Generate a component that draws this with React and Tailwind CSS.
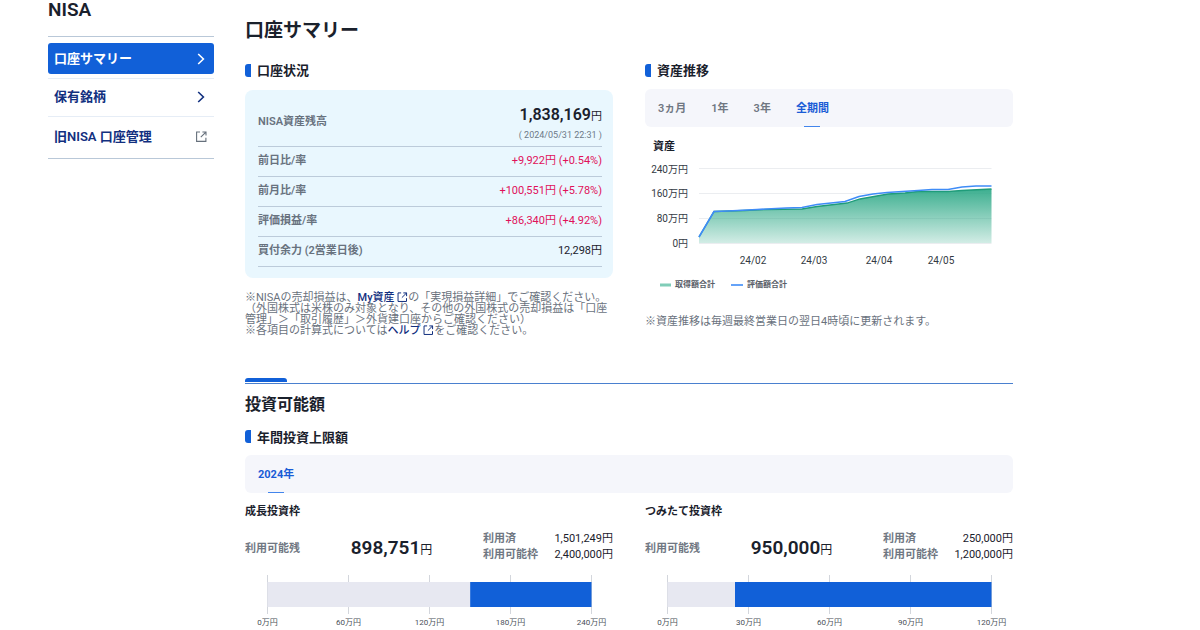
const NAVY_ICON = "#12307f";

function ChevronIcon({ color }) {
  return (
    <svg width="8" height="12" viewBox="0 0 8 12" fill="none" aria-hidden="true">
      <path d="M1.2 1 L6.4 6 L1.2 11" stroke={color} strokeWidth="1.6" />
    </svg>
  );
}

function ExternalIcon({ color, className }) {
  return (
    <svg width="11" height="11" viewBox="0 0 11 11" fill="none" className={className} aria-hidden="true">
      <path d="M4 1 H0.6 V10.4 H9.9 V6.8" stroke={color} strokeWidth="1.1" />
      <path d="M6.4 1 H10 V4.6 M9.9 1.1 L4.8 6.2" stroke={color} strokeWidth="1.1" />
    </svg>
  );
}

function SectionTitle({ children }) {
  return (
    <h3 className="flex h-5 items-center gap-1.5 text-[13px] leading-[18px] font-bold">
      <span className="h-[13px] w-1.5 rounded-l-[3px] bg-[#1160d8]" />
      <span className="pt-0.5">{children}</span>
    </h3>
  );
}

function Tabs({ items, active }) {
  return (
    <div className="flex h-[38px] gap-[25px] rounded-md bg-[#f5f6fb] pr-3 pl-[13px] text-[11px]">
      {items.map((item) => (
        <button
          key={item}
          type="button"
          className={
            item === active
              ? "flex flex-col items-center justify-between pt-0.5 font-bold text-[#1a5cd6]"
              : "flex flex-col items-center justify-between pt-0.5 font-semibold text-[#707782]"
          }
        >
          <span className="leading-[35px]">{item}</span>
          {item === active && <span className="h-px w-4 bg-[#4285ec]" />}
        </button>
      ))}
    </div>
  );
}

const changes = [
  { label: "前日比/率", value: "+9,922円 (+0.54%)" },
  { label: "前月比/率", value: "+100,551円 (+5.78%)" },
  { label: "評価損益/率", value: "+86,340円 (+4.92%)" },
];

function StatusPanel() {
  return (
    <div className="rounded-lg bg-[#e9f7fe] pt-3 pr-[11px] pb-[11px] pl-[13px]">
      <table className="w-full text-[11px]">
        <tbody>
          <tr className="h-11 border-b border-[#bccbda]">
            <th scope="row" className="pb-1 text-left font-semibold text-[#68727e]">NISA資産残高</th>
            <td className="text-right">
              <div className="text-[16px] leading-5 font-semibold">
                1,838,169<span className="text-[11px] font-normal">円</span>
              </div>
              <div className="text-[9px] leading-4 text-[#6d7987]">( 2024/05/31 22:31 )</div>
            </td>
          </tr>
          {changes.map((row) => (
            <tr key={row.label} className="h-[30px] border-b border-[#bccbda]">
              <th scope="row" className="text-left font-semibold text-[#68727e]">{row.label}</th>
              <td className="text-right text-[#e0115a]">{row.value}</td>
            </tr>
          ))}
          <tr className="h-[30px] border-b border-[#bccbda]">
            <th scope="row" className="text-left font-semibold text-[#68727e]">買付余力 (2営業日後)</th>
            <td className="text-right">12,298円</td>
          </tr>
        </tbody>
      </table>
    </div>
  );
}

function AssetChart() {
  const blue =
    "54,102 69,76.5 83,76 112,74.5 141,73 157,72.5 172,69.5 200,66.5 214,61.5 228,59 242,57.5 273,55.5 287,54.5 303,54.5 317,52 331,51 346.5,51";
  const green =
    "54,102 69,76.5 100,75.5 120,74.5 157,74 172,71.5 202,68 215,64 243,59 260,58 273,56.5 303,56.5 317,55.5 346.5,54";
  return (
    <svg viewBox="0 0 368 160" className="block w-full" role="img" aria-label="資産">
      <defs>
        <linearGradient id="fill" x1="0" y1="54" x2="0" y2="108" gradientUnits="userSpaceOnUse">
          <stop offset="0" stopColor="#33ab8a" stopOpacity="0.95" />
          <stop offset="1" stopColor="#33ab8a" stopOpacity="0.22" />
        </linearGradient>
      </defs>
      <text x="8" y="15" className="fill-[#1a212c] text-[11px] font-bold">資産</text>
      <g stroke="#ebedf0" strokeWidth="1">
        <path d="M54 33.5H346.5M54 58.5H346.5M54 83.5H346.5M54 108.5H346.5" />
      </g>
      <polygon points={green + " 346.5,108 54,108"} fill="url(#fill)" />
      <polyline points={green} fill="none" stroke="#1f9c7a" strokeWidth="1.3" />
      <polyline points={blue} fill="none" stroke="#3f8cf7" strokeWidth="1.6" />
      <g textAnchor="end" className="fill-[#333a44] text-[10px]">
        <text x="43" y="38">240万円</text>
        <text x="43" y="62">160万円</text>
        <text x="43" y="87">80万円</text>
        <text x="43" y="112">0円</text>
      </g>
      <g textAnchor="middle" className="fill-[#333a44] text-[10px]">
        <text x="108" y="129">24/02</text>
        <text x="169" y="129">24/03</text>
        <text x="234" y="129">24/04</text>
        <text x="296" y="129">24/05</text>
      </g>
      <rect x="15" y="148.5" width="11" height="3" fill="#80cdb8" />
      <path d="M86 150H98" stroke="#3f8cf7" strokeWidth="1.6" />
      <g className="fill-[#5a6068] text-[8px] font-bold">
        <text x="30" y="152">取得額合計</text>
        <text x="102" y="152">評価額合計</text>
      </g>
    </svg>
  );
}

function LimitBar({ used, limit, ticks }) {
  const split = 22.5 + (324 * used) / limit;
  return (
    <svg viewBox="0 0 368 56" className="block w-full" role="img" aria-label="利用状況">
      {ticks.map((tick, i) => (
        <g key={tick}>
          <path d={`M${22.5 + 81 * i} 1V40`} stroke="#d3d6dc" strokeWidth="1" />
          <text x={22.5 + 81 * i} y="51" textAnchor="middle" className="fill-[#4a5058] text-[8px]">{tick}</text>
        </g>
      ))}
      <rect x="22.5" y="8" width={split - 22.5} height="25" fill="#e7e8f1" />
      <rect x={split} y="8" width={346.5 - split} height="25" fill="#1160d8" />
    </svg>
  );
}

function LimitCard({ title, remaining, usedText, limitText, ...bar }) {
  return (
    <section className="min-w-0 flex-1">
      <h4 className="text-[11px] leading-4 font-bold">{title}</h4>
      <div className="mt-2.5 flex items-center justify-between">
        <div className="pt-1.5 text-[11px] font-semibold text-[#707782]">利用可能残</div>
        <div className="pt-1 text-[19px] leading-7 font-semibold">
          {remaining}<span className="text-[12px] font-normal">円</span>
        </div>
        <table className="w-[130px] text-[11px] leading-4">
          <tbody>
            <tr>
              <th scope="row" className="p-0 text-left font-semibold text-[#707782]">利用済</th>
              <td className="p-0 text-right">{usedText}円</td>
            </tr>
            <tr>
              <th scope="row" className="p-0 text-left font-semibold text-[#707782]">利用可能枠</th>
              <td className="p-0 text-right">{limitText}円</td>
            </tr>
          </tbody>
        </table>
      </div>
      <div className="mt-2.5">
        <LimitBar {...bar} />
      </div>
    </section>
  );
}

function Sidebar() {
  return (
    <aside className="w-[166px] shrink-0">
      <div className="h-9 text-[19px] leading-5 font-semibold">NISA</div>
      <nav className="border-y border-[#b9c8d8] pt-1.5 text-[13px] font-semibold text-[#12307f]">
        <a href="#summary" className="flex h-[31px] items-center justify-between rounded-[3px] bg-[#1160d8] pr-[9px] pl-1.5 text-white">
          口座サマリー
          <ChevronIcon color="#ffffff" />
        </a>
        <a href="#holdings" className="mt-1 flex h-[38px] items-center justify-between border-t border-[#e6edf6] pr-[9px] pb-0.5 pl-1.5">
          保有銘柄
          <ChevronIcon color={NAVY_ICON} />
        </a>
        <a href="#old-nisa" className="flex h-[42px] items-center justify-between border-t border-[#e6edf6] pr-[7px] pb-0.5 pl-1.5">
          旧NISA 口座管理
          <ExternalIcon color="#66707c" />
        </a>
      </nav>
    </aside>
  );
}

export default function App() {
  return (
    <div className="flex max-w-[1061px] gap-[31px] bg-white px-12 font-['Roboto','Noto_Sans_CJK_JP',sans-serif] text-[#1a212c]" lang="ja">
      <Sidebar />
      <main className="min-w-0 flex-1">
        <h1 className="pt-[17px] text-[19px] leading-7 font-semibold">口座サマリー</h1>
        <div className="mt-[15px] flex gap-8">
          <section className="min-w-0 flex-1">
            <SectionTitle>口座状況</SectionTitle>
            <div className="mt-2.5">
              <StatusPanel />
            </div>
            <div className="mt-3.5 text-[11px] leading-[11px] text-[#6a727d]">
              <p>
                ※NISAの売却損益は、
                <a href="#assets" className="font-medium text-[#12307f]">
                  My資産 <ExternalIcon color={NAVY_ICON} className="inline-block h-2.5 align-[-1px]" />
                </a>
                の「実現損益詳細」でご確認ください。
              </p>
              <p>（外国株式は米株のみ対象となり、その他の外国株式の売却損益は「口座管理」＞「取引履歴」＞外貨建口座からご確認ください）</p>
              <p>
                ※各項目の計算式については
                <a href="#help" className="font-medium text-[#12307f]">
                  ヘルプ <ExternalIcon color={NAVY_ICON} className="inline-block h-2.5 align-[-1px]" />
                </a>
                をご確認ください。
              </p>
            </div>
          </section>
          <section className="min-w-0 flex-1">
            <SectionTitle>資産推移</SectionTitle>
            <div className="mt-[9px]">
              <Tabs items={["3ヵ月", "1年", "3年", "全期間"]} active="全期間" />
            </div>
            <div className="mt-2">
              <AssetChart />
            </div>
            <p className="mt-[19px] text-[11px] leading-4 text-[#6a727d]">※資産推移は毎週最終営業日の翌日4時頃に更新されます。</p>
          </section>
        </div>

        <div className="mt-[42px] border-b border-[#4a80cf] pb-px">
          <div className="h-1 w-[42px] rounded-t-[3px] bg-[#1160d8]" />
        </div>
        <h2 className="mt-[9px] text-[16px] leading-6 font-semibold">投資可能額</h2>
        <div className="mt-2.5">
          <SectionTitle>年間投資上限額</SectionTitle>
        </div>
        <div className="mt-2">
          <Tabs items={["2024年"]} active="2024年" />
        </div>
        <div className="mt-[11px] flex gap-8">
          <LimitCard
            title="成長投資枠"
            remaining="898,751"
            usedText="1,501,249"
            limitText="2,400,000"
            used={1501249}
            limit={2400000}
            ticks={["0万円", "60万円", "120万円", "180万円", "240万円"]}
          />
          <LimitCard
            title="つみたて投資枠"
            remaining="950,000"
            usedText="250,000"
            limitText="1,200,000"
            used={250000}
            limit={1200000}
            ticks={["0万円", "30万円", "60万円", "90万円", "120万円"]}
          />
        </div>
      </main>
    </div>
  );
}
